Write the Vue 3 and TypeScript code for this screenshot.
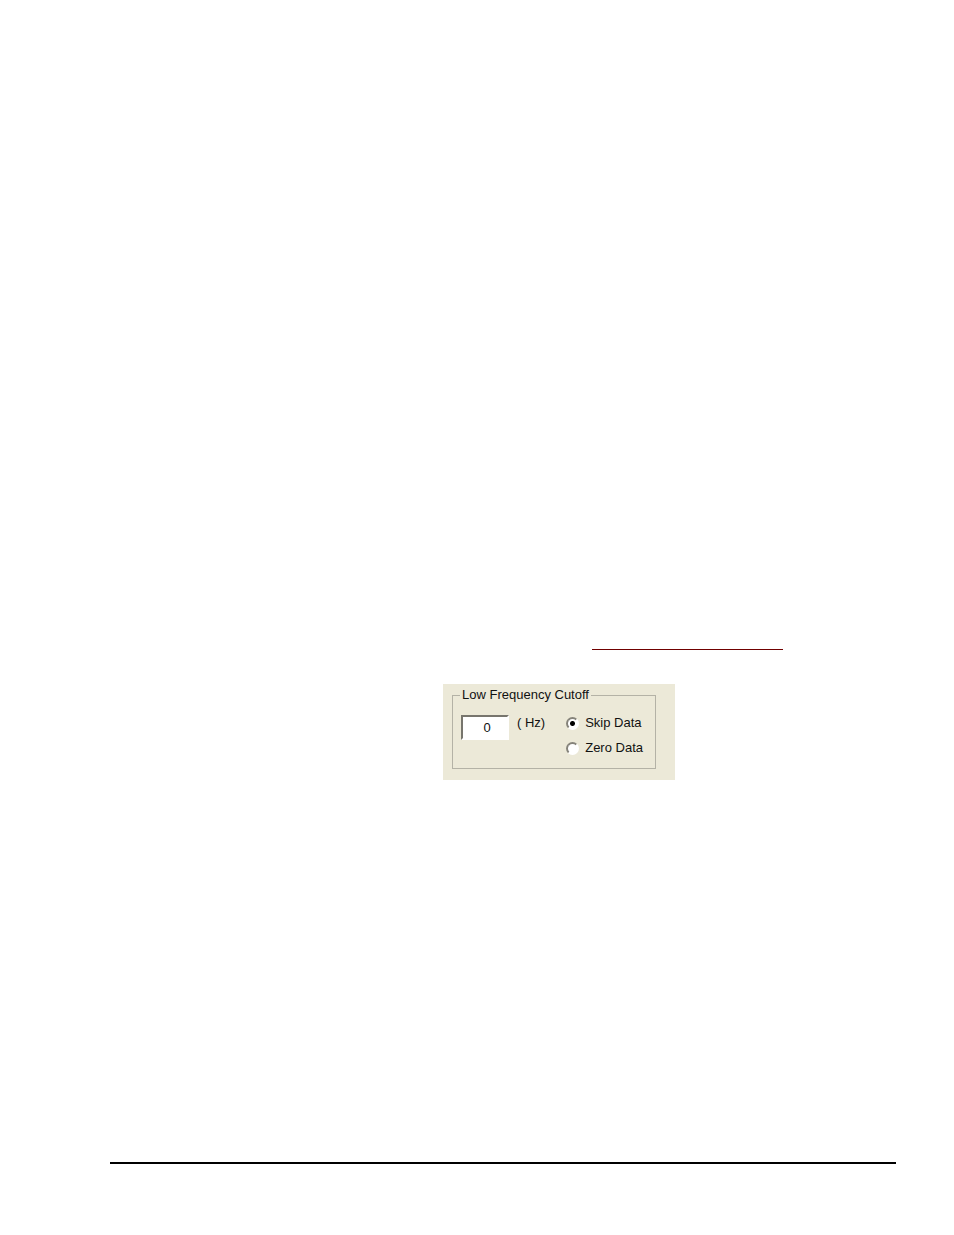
<script setup lang="ts">
import { ref } from 'vue'

type CutoffMode = 'skip' | 'zero'

const cutoff = ref('0')
const mode = ref<CutoffMode>('skip')
const options: { value: CutoffMode; label: string }[] = [
  { value: 'skip', label: 'Skip Data' },
  { value: 'zero', label: 'Zero Data' },
]
</script>

<template>
  <main class="page">
    <section class="content">
      <hr class="reference-rule" />
      <form class="panel" @submit.prevent>
        <fieldset class="group">
          <legend>Low Frequency Cutoff</legend>
          <div class="fields">
            <div class="frequency">
              <input id="cutoff" v-model="cutoff" class="value" type="text" />
              <label for="cutoff">( Hz)</label>
            </div>
            <div class="modes">
              <label v-for="option in options" :key="option.value" class="mode">
                <input v-model="mode" type="radio" name="mode" :value="option.value" />
                <span>{{ option.label }}</span>
              </label>
            </div>
          </div>
        </fieldset>
      </form>
    </section>
    <hr class="footer-rule" />
  </main>
</template>

<style>
body {
  margin: 0;
  background: #fff;
}
</style>

<style scoped>
.page {
  box-sizing: border-box;
  min-height: 100vh;
  display: flex;
  flex-direction: column;
  padding: 649px 58px 71px 110px;
  font: 13px/16px "Liberation Sans", Arial, sans-serif;
  color: #111;
}

.content {
  flex: 1;
  padding-left: 333px;
}

.reference-rule {
  width: 191px;
  height: 1px;
  margin: 0 0 34px 149px;
  border: 0;
  background: #700000;
}

.panel {
  box-sizing: border-box;
  width: 232px;
  padding: 3px 19px 11px 9px;
  background: #ece9d8;
}

.group {
  min-width: 0;
  margin: 0;
  padding: 0 12px 12px 8px;
  border: 1px solid #b4b2a6;
}

legend {
  margin-left: -1px;
  padding: 0 2px;
}

.fields {
  display: flex;
  justify-content: space-between;
  align-items: flex-start;
  padding-top: 12px;
}

.frequency {
  display: flex;
  gap: 8px;
}

.value {
  box-sizing: border-box;
  width: 48px;
  height: 25px;
  margin: 0;
  padding: 0 0 0 4px;
  border: 2px solid;
  border-color: #77756d #fff #fff #77756d;
  border-radius: 0;
  outline: 0;
  background: #fff;
  color: inherit;
  font: inherit;
  text-align: center;
}

.modes {
  display: flex;
  flex-direction: column;
  gap: 9px;
}

.mode {
  display: flex;
  align-items: center;
  gap: 6px;
}

.mode input {
  appearance: none;
  box-sizing: border-box;
  width: 13px;
  height: 13px;
  margin: 0;
  border: 2px solid;
  border-color: #85837a #fff #fff #85837a;
  border-radius: 50%;
  background: #fff;
}

.mode input:checked {
  background: radial-gradient(circle, #000 0 2px, #fff 3px);
}

.footer-rule {
  width: 100%;
  height: 2px;
  margin: 0;
  border: 0;
  background: #000;
}
</style>
